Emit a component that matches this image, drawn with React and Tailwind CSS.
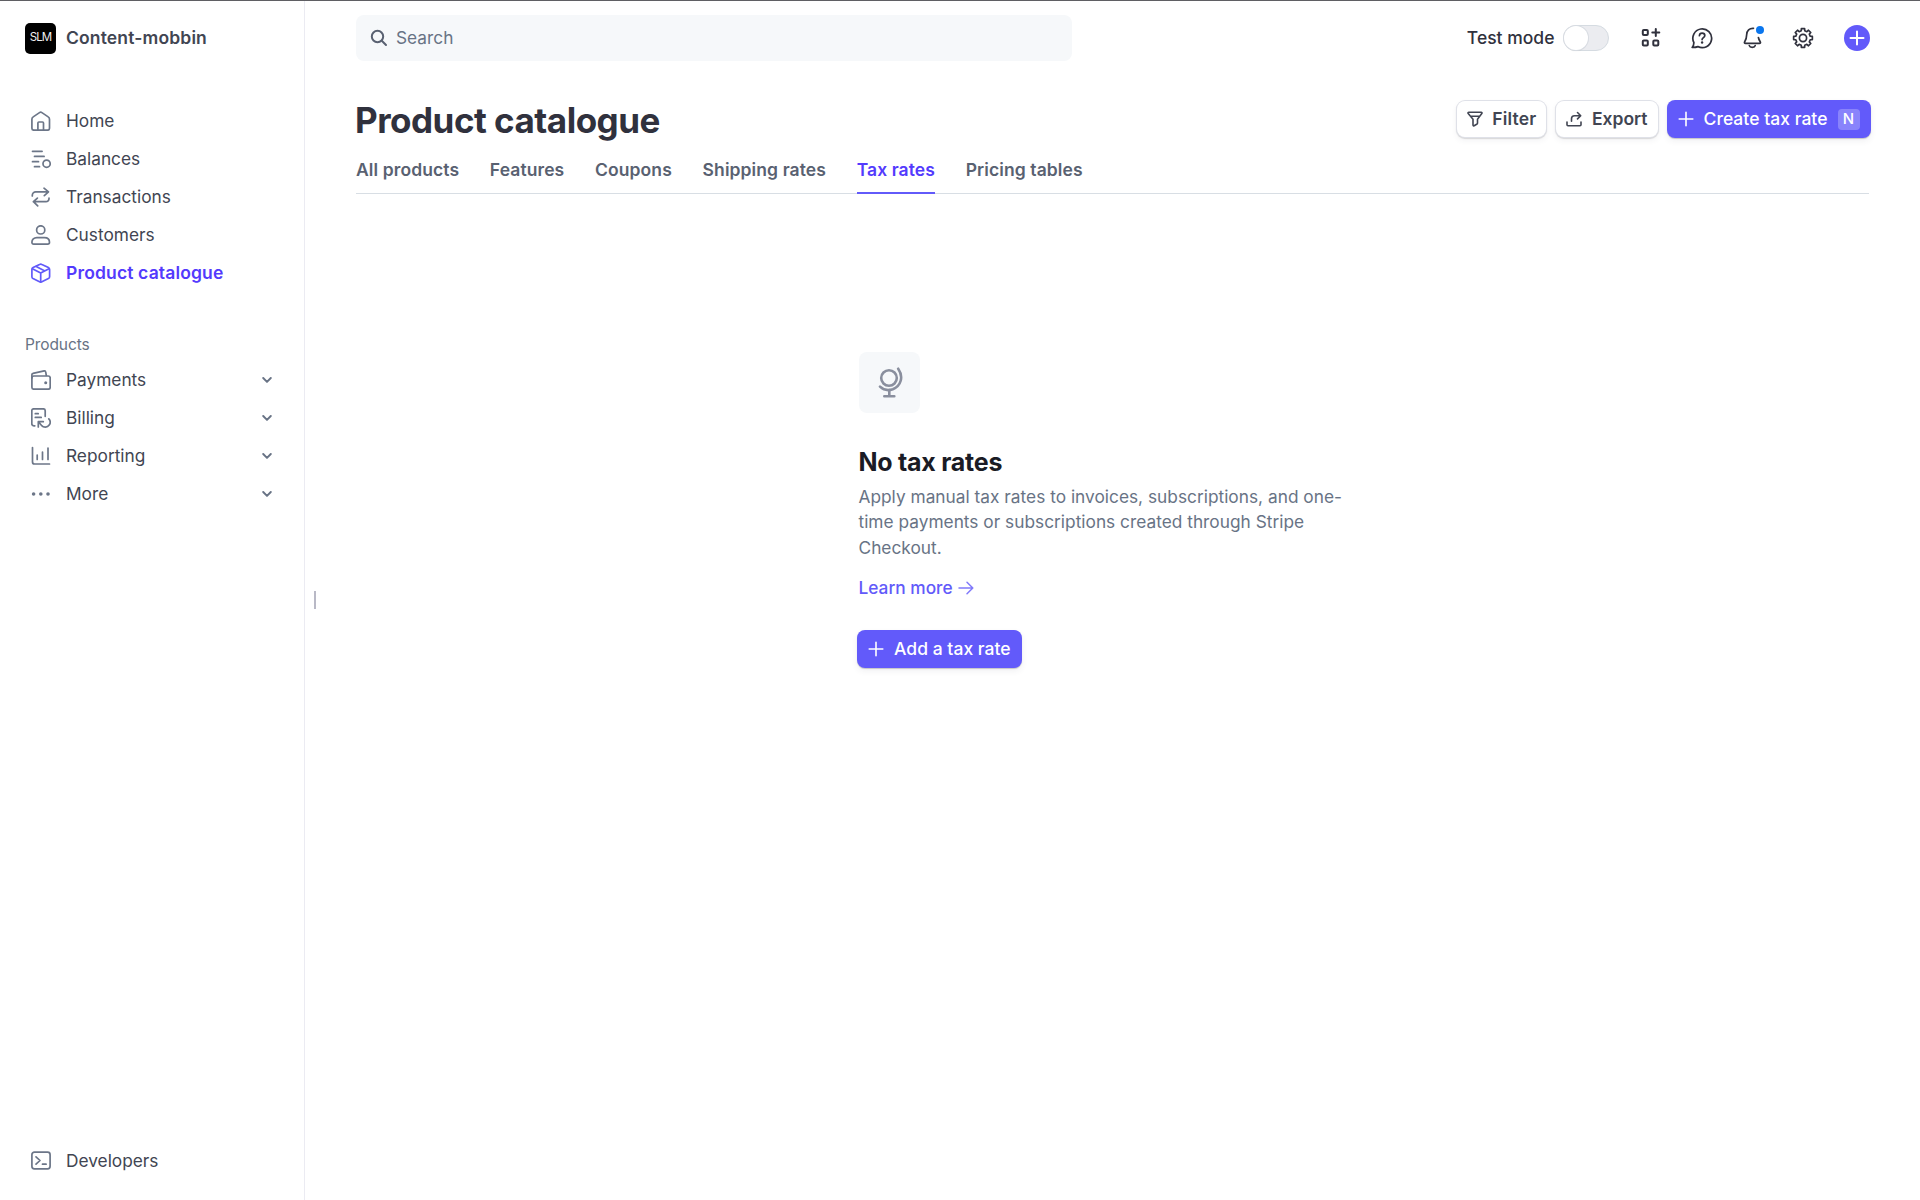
import { useState } from 'react';

const Icon = ({ size = 20, stroke = 1.7, className = '', children }) => (
  <svg
    width={size}
    height={size}
    viewBox={`0 0 ${size} ${size}`}
    fill="none"
    stroke="currentColor"
    strokeWidth={stroke}
    strokeLinecap="round"
    strokeLinejoin="round"
    className={`shrink-0 ${className}`}
  >
    {children}
  </svg>
);

const HomeIcon = () => (
  <Icon>
    <path d="M.9 8.2c0-1 .5-1.8 1.3-2.3L8.5 1.6a2.2 2.2 0 0 1 2.4 0l6.3 4.3c.8.5 1.3 1.3 1.3 2.3v9a2 2 0 0 1-2 2H2.9a2 2 0 0 1-2-2z" />
    <path d="M6.9 19v-7a1 1 0 0 1 1-1h3.6a1 1 0 0 1 1 1v7" />
  </Icon>
);

const BalancesIcon = () => (
  <Icon>
    <path d="M1.5 2.3h9.6M3.5 7.4h9.6M1.5 12.7h6M3.5 17.7h5" />
    <circle cx="15.6" cy="14.7" r="3.6" />
  </Icon>
);

const TransactionsIcon = () => (
  <Icon>
    <path d="M1.3 9V8.3a3.5 3.5 0 0 1 3.5-3.5h12.6M13 1.2l4.5 3.6L13.3 8.6" />
    <path d="M18 11v.7a3 3 0 0 1-3 3H2.4M6.7 18.8l-4.3-4.1 4-3.6" />
  </Icon>
);

const CustomersIcon = () => (
  <Icon>
    <circle cx="9.7" cy="4.9" r="4.1" />
    <path d="M.9 17.3c0-2.8 2-4.7 5-4.7h7.6c3 0 5 1.9 5 4.7 0 1-.7 1.8-1.8 1.8H2.7c-1.1 0-1.8-.8-1.8-1.8z" />
  </Icon>
);

const ProductIcon = () => (
  <Icon>
    <path d="M8.5 1.4a2.4 2.4 0 0 1 2.4 0l6.5 3.2c.7.4 1.2 1.1 1.2 1.9v7.2c0 .8-.4 1.5-1.2 1.9l-6.5 3.2a2.4 2.4 0 0 1-2.4 0l-6.5-3.2A2.2 2.2 0 0 1 .9 13.7V6.5c0-.8.4-1.5 1.2-1.9z" />
    <path d="M1.4 5.8l8.3 4.2 8.3-4.2M9.7 10v9M5.2 3.4l8.2 4.3" />
  </Icon>
);

const PaymentsIcon = () => (
  <Icon>
    <rect x=".9" y="6" width="18.3" height="13.2" rx="2" />
    <path d="M.9 8V4.6c0-.7.4-1.2 1.1-1.3L13.2.9c.8-.1 1.4.3 1.5 1l.6 3.6" />
    <circle cx="14.7" cy="12.8" r="1.5" fill="currentColor" stroke="none" />
  </Icon>
);

const BillingIcon = () => (
  <Icon>
    <path d="M3.8 17.8h-1a2 2 0 0 1-2-2V2.8a2 2 0 0 1 2-2h9.4a2 2 0 0 1 2 2v5.5" />
    <path d="M4.3 5.7h2.9M4.3 9.4h5.9" />
    <path d="M7.3 19v-5.3h5M7.6 14l2.8 3.3c2.3 2.5 6 2.3 7.8-.2 1.4-2 1.3-4.4-.4-6.2" />
  </Icon>
);

const ReportingIcon = () => (
  <Icon>
    <path d="M1.5 1.5V16a2 2 0 0 0 2 2h15M6.2 9v4.5M11.5 6v7.5M17 2v11.5" />
  </Icon>
);

const MoreIcon = () => (
  <Icon>
    <g fill="currentColor" stroke="none">
      <circle cx="2.6" cy="10" r="1.8" />
      <circle cx="9.8" cy="10" r="1.8" />
      <circle cx="17" cy="10" r="1.8" />
    </g>
  </Icon>
);

const DevelopersIcon = () => (
  <Icon>
    <rect x=".9" y="1.2" width="18.2" height="16.6" rx="2.5" />
    <path d="M5 5.8L9 9.5l-4 3.7M11.5 13.2h3.6" />
  </Icon>
);

const Chevron = () => (
  <Icon size={10} stroke={1.9} className="text-[#687385]">
    <path d="M1.2 3l3.8 3.9L8.8 3" />
  </Icon>
);

const Plus = () => (
  <Icon size={16} stroke={1.6}>
    <path d="M8 1.2v13.6M1.2 8h13.6" />
  </Icon>
);

// eight rounded teeth around the centre of a 22px box
const gearPath = (() => {
  const pts = [];
  for (let i = 0; i < 8; i++) {
    const mid = (i * Math.PI) / 4;
    [[-0.24, 7.4], [-0.17, 9.5], [0.17, 9.5], [0.24, 7.4]].forEach(([d, r]) => {
      pts.push(`${(11 + r * Math.sin(mid + d)).toFixed(2)} ${(11 - r * Math.cos(mid + d)).toFixed(2)}`);
    });
  }
  return `M${pts.join('L')}Z`;
})();

const mainNav = [
  { label: 'Home', icon: HomeIcon },
  { label: 'Balances', icon: BalancesIcon },
  { label: 'Transactions', icon: TransactionsIcon },
  { label: 'Customers', icon: CustomersIcon },
  { label: 'Product catalogue', icon: ProductIcon, active: true },
];

const productNav = [
  { label: 'Payments', icon: PaymentsIcon },
  { label: 'Billing', icon: BillingIcon },
  { label: 'Reporting', icon: ReportingIcon },
  { label: 'More', icon: MoreIcon },
];

const tabs = ['All products', 'Features', 'Coupons', 'Shipping rates', 'Tax rates', 'Pricing tables'];

const NavItem = ({ item, expandable }) => {
  const ItemIcon = item.icon;
  return (
    <a className="flex h-[38.1px] items-center gap-[15px] pl-[6px] pr-[7px]">
      <span className={item.active ? 'text-[#625afa]' : 'text-[#6c7688]'}>
        <ItemIcon />
      </span>
      <span
        className={`flex-1 ${
          item.active ? 'font-semibold tracking-[0.15px] text-[17.5px] text-[#533afd]' : 'text-[17.3px] text-[#414552]'
        }`}
      >
        {item.label}
      </span>
      {expandable && <Chevron />}
    </a>
  );
};

const Sidebar = () => (
  <aside className="flex w-[305px] shrink-0 flex-col border-r border-[#ebebf2] pl-[25px] pr-[25px] pt-[21px]">
    <div className="flex h-[32px] items-center gap-[10px]">
      <div className="flex h-[31px] w-[31px] items-center justify-center rounded-[5px] bg-black pb-[2px]">
        <span className="text-[11.5px] leading-[18px] tracking-[-1px] text-[#efefef]">SLM</span>
      </div>
      <span className="pt-px text-[17.5px] font-semibold tracking-[0.15px] text-[#414552]">Content-mobbin</span>
    </div>
    <nav className="mt-[47.8px]">
      {mainNav.map((item) => <NavItem key={item.label} item={item} />)}
    </nav>
    <h2 className="mt-[41.4px] h-[22px] text-[15.5px] leading-[22px] tracking-[-0.1px] text-[#687385]">Products</h2>
    <nav className="mt-[5.1px]">
      {productNav.map((item) => <NavItem key={item.label} item={item} expandable />)}
    </nav>
    <nav className="mt-auto pb-[20px]">
      <NavItem item={{ label: 'Developers', icon: DevelopersIcon }} />
    </nav>
  </aside>
);

const TopBar = () => {
  const [testMode, setTestMode] = useState(false);

  return (
    <header className="flex items-center justify-between">
      <div className="flex h-[46px] w-[716px] items-center gap-[8.5px] rounded-lg bg-[#f6f8fa] pl-[13.5px]">
        <Icon size={18} stroke={2} className="text-[#596171]">
          <circle cx="7.5" cy="7.5" r="5.7" />
          <path d="M11.8 11.8l4.2 4.2" />
        </Icon>
        <span className="text-[17.3px] text-[#687385]">Search</span>
      </div>
      <div className="-mr-px flex items-center text-[#30313d]">
        <span className="pt-px text-[17.5px] font-medium">Test mode</span>
        <button
          onClick={() => setTestMode(!testMode)}
          className={`ml-[8.5px] flex h-[26px] w-[46px] items-center rounded-full border border-[#d5dbe1] bg-[#ebecf0] ${testMode ? 'justify-end' : ''}`}
        >
          <span className="h-[24px] w-[24px] rounded-full bg-white shadow-[0_0_0_1px_#d8dce2,0_1px_1px_#0000001f]" />
        </button>
        <div className="ml-[31px] flex items-center gap-[28.7px]">
          <Icon size={22} stroke={2}>
            <rect x="2.8" y="3" width="5" height="5" rx="1" />
            <rect x="2.8" y="13.6" width="5" height="5" rx="1" />
            <rect x="13.3" y="13.6" width="5" height="5" rx="1" />
            <path d="M15.8 2v7M12.3 5.5h7" />
          </Icon>
          <Icon size={22} stroke={1.7}>
            <path d="M2.9 15.6a9.4 9.4 0 1 1 4 4c-1.8.7-3.8 1-5.7.8 1-.8 1.6-2.8 1.7-4.8z" />
            <path d="M8.4 8.7c.1-1.6 1.2-2.6 2.7-2.6 1.6 0 2.7 1 2.7 2.4 0 2.2-2.7 2-2.7 4.1" />
            <circle cx="11.1" cy="15.5" r="1.2" fill="currentColor" stroke="none" />
          </Icon>
          <div className="relative">
            <Icon size={22} stroke={1.7}>
              <path d="M12.5 1.3C8.3 1 5.9 3.7 5.7 7.5c-.1 3.9-.7 5.2-2 7.2-.6.9-.2 1.7.8 1.7h13.9c1 0 1.4-.8.8-1.7-.9-1.4-1.500-2.500-1.800-4.200" />
              <path d="M8.3 18.6c.6 2.3 5.3 2.3 5.9 0" />
            </Icon>
            <span className="absolute right-[-1px] top-[-1px] h-2 w-2 rounded-full bg-[#0a76ee]" />
          </div>
          <Icon size={22} stroke={1.7}>
            <path d={gearPath} />
            <circle cx="11" cy="11" r="3.6" />
          </Icon>
        </div>
        <button className="ml-[30px] flex h-[26px] w-[26px] items-center justify-center rounded-full bg-[#625afa] text-white">
          <Icon size={16} stroke={2}>
            <path d="M8 1.5v13M1.5 8h13" />
          </Icon>
        </button>
      </div>
    </header>
  );
};

const secondaryButton =
  'flex h-[36px] items-center gap-[9.5px] rounded-lg bg-white px-[10px] text-[17.5px] font-semibold text-[#414552] shadow-[0_0_0_1px_#dfe1e8,0_1px_1px_1px_#0000001f,0_3px_6px_#3c425714]';
const primaryButton =
  'flex h-[38px] items-center gap-[10px] rounded-lg bg-[#625afa] text-[17.5px] font-medium text-white shadow-[0_1px_1px_#00000030,0_3px_6px_#3c425714]';

export default function App() {
  const [activeTab, setActiveTab] = useState('Tax rates');

  return (
    <div className="flex h-screen w-full overflow-hidden border-t border-[#5f5f63] bg-white font-['Inter',sans-serif]">
      <Sidebar />

      {/* Sidebar resize handle */}
      <div className="flex w-[51px] shrink-0 items-center pb-[2px] pl-[9px]">
        <div className="h-[18px] w-[2px] bg-[#b9b9c6]" />
      </div>

      <main className="min-w-0 flex-1 pr-[51px] pt-[14px]">
        <TopBar />

        <div className="mt-[39px] flex items-center justify-between">
          <h1 className="-ml-px text-[35px] leading-[40px] font-bold tracking-[-0.5px] text-[#30313d]">Product catalogue</h1>
          <div className="-mr-[1.5px] flex items-center pb-[2px]">
            <button className={secondaryButton}>
              <Icon size={16} stroke={1.6}>
                <path d="M1.9 1.2h12.2c.8 0 1.1.8.7 1.4l-4.3 5.6v3.9c0 .4-.2.7-.5.9l-2.8 1.7c-.6.4-1.2 0-1.2-.7V8.2L1.2 2.6c-.4-.6-.1-1.4.7-1.4zM3.5 5.3h9" />
              </Icon>
              <span className="tracking-[0.2px]">Filter</span>
            </button>
            <button className={`${secondaryButton} ml-[10px]`}>
              <Icon size={16} stroke={1.6}>
                <path d="M1 11v2.7c0 .6.4 1 1 1h12c.6 0 1-.4 1-1V11" />
                <path d="M5.5 10.3V7.7a3 3 0 0 1 3-3h6M11.5 1.5l3.2 3.2-3.2 3.2" />
              </Icon>
              <span>Export</span>
            </button>
            <button className={`${primaryButton} ml-[9px] px-[11px]`}>
              <Plus />
              <span className="tracking-[0.03px]">Create tax rate</span>
              <span className="flex h-[21px] w-[22px] items-center justify-center rounded bg-white/25 text-[15px]">N</span>
            </button>
          </div>
        </div>

        <div className="mt-[17px] flex h-[37px] gap-[30.7px] border-b border-[#d8dee4]">
          {tabs.map((tab) => (
            <button
              key={tab}
              onClick={() => setActiveTab(tab)}
              className={`-mb-px h-[37px] border-b-2 pb-[9px] text-[17.5px] leading-[26px] font-semibold tracking-[0.1px] whitespace-nowrap ${
                activeTab === tab ? 'border-[#625afa] text-[#533afd]' : 'border-transparent text-[#596171]'
              }`}
            >
              {tab}
            </button>
          ))}
        </div>

        {/* Empty state */}
        <section className="mx-auto mt-[158px] w-[508px]">
          <div className="flex h-[61px] w-[61px] items-center justify-center rounded-lg bg-[#f6f8fa] text-[#8a8f9e]">
            <Icon size={32} stroke={2.6}>
              <circle cx="16" cy="11" r="7.8" />
              <path d="M25.2 1.7c5.6 8 2.8 17.3-5.4 20.5-4.7 1.7-9.6.4-12.8-2.6" />
              <path d="M16.3 23v6M11.3 29.3h10" />
            </Icon>
          </div>
          <h3 className="mt-[33.5px] text-[25px] leading-[30px] font-bold tracking-[-0.25px] text-[#1a1b25]">No tax rates</h3>
          <p className="mt-[7.5px] text-[17.3px] leading-[25.4px] tracking-[0.01px] text-[#687385]">
            Apply manual tax rates to invoices, subscriptions, and one-
            <br />
            time payments or subscriptions created through Stripe
            <br />
            Checkout.
          </p>
          <a className="mt-[15px] flex items-center gap-[5px] text-[17.3px] leading-[26px] font-medium text-[#625afa]">
            Learn more
            <Icon size={16} stroke={1.5} className="opacity-80">
              <path d="M1 8h13.5M9 2.2L14.8 8 9 13.8" />
            </Icon>
          </a>
          <button className={`${primaryButton} mt-[29px] -ml-[1.5px] px-[11px]`}>
            <Plus />
            <span className="tracking-[0.03px]">Add a tax rate</span>
          </button>
        </section>
      </main>
    </div>
  );
}
